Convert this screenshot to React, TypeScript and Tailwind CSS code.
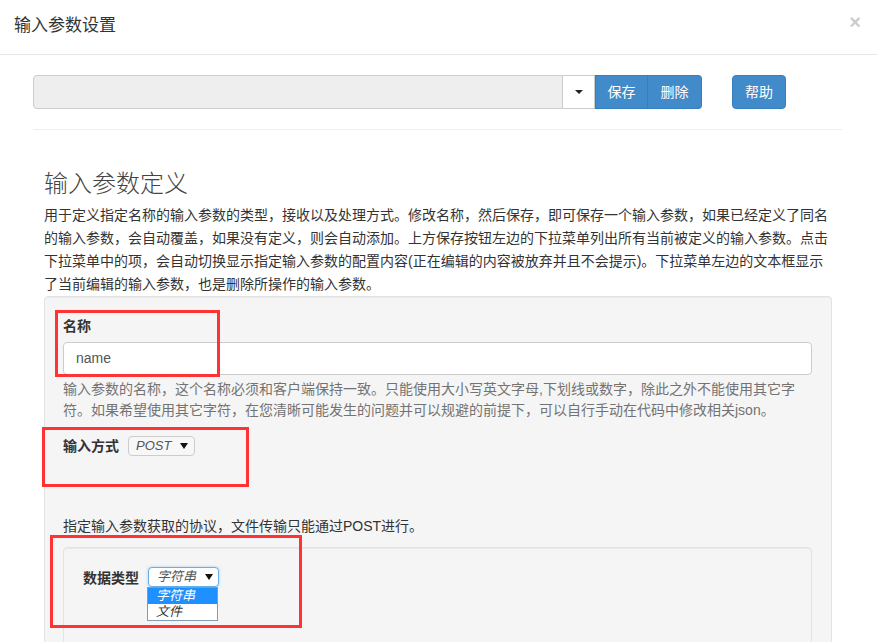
import React from 'react';

const FONT = '"Liberation Sans", "Noto Sans CJK SC", Arial, sans-serif';

function Caret({ className = '' }: { className?: string }) {
  return (
    <svg width="8" height="6" viewBox="0 0 8 6" className={className}>
      <path d="M0 0 L8 0 L4 6 Z" fill="#111" />
    </svg>
  );
}

export default function App() {
  return (
    <div
      className="relative w-[877px] h-[642px] overflow-hidden bg-white text-[14px] text-[#333]"
      style={{ fontFamily: FONT }}
    >
      {/* Modal header */}
      <div className="h-[55px] border-b border-[#e5e5e5] flex items-center justify-between pl-[14px] pr-[16px]">
        <h4 className="text-[17px] leading-[20px] text-[#333] -mt-[3px]">输入参数设置</h4>
        <span className="text-[20px] font-bold leading-none text-black opacity-20 -mt-[10px]">×</span>
      </div>

      <div className="px-[33px] pt-[20px]">
        {/* Parameter selector row */}
        <div className="flex h-[34px]">
          <div className="w-[530px] bg-[#eeeeee] border border-[#cccccc] rounded-l-[4px]" />
          <button className="w-[32px] bg-white border border-l-0 border-[#cccccc] flex items-center justify-center">
            <svg width="8" height="4" viewBox="0 0 8 4">
              <path d="M0 0 L8 0 L4 4 Z" fill="#222" />
            </svg>
          </button>
          <button className="w-[53px] bg-[#428bca] border border-[#357ebd] text-white text-[14px]">保存</button>
          <button className="w-[54px] bg-[#428bca] border border-l-0 border-[#357ebd] text-white text-[14px] rounded-r-[4px]">删除</button>
          <button className="ml-[30px] w-[54px] bg-[#428bca] border border-[#357ebd] text-white text-[14px] rounded-[4px]">帮助</button>
        </div>

        <div className="mt-[20px] w-[809px] border-t border-[#eeeeee]" />

        <div className="pl-[11px] w-[799px]">
          <h3 className="mt-[41px] text-[24px] leading-[26px] text-[#444] font-light">输入参数定义</h3>
          <p className="mt-[7px] leading-[23px] text-[#333] whitespace-nowrap">
            用于定义指定名称的输入参数的类型，接收以及处理方式。修改名称，然后保存，即可保存一个输入参数，如果已经定义了同名
            <br />
            的输入参数，会自动覆盖，如果没有定义，则会自动添加。上方保存按钮左边的下拉菜单列出所有当前被定义的输入参数。点击
            <br />
            下拉菜单中的项，会自动切换显示指定输入参数的配置内容(正在编辑的内容被放弃并且不会提示)。下拉菜单左边的文本框显示
            <br />
            了当前编辑的输入参数，也是删除所操作的输入参数。
          </p>

          {/* Well */}
          <div className="w-[788px] bg-[#f5f5f5] border border-[#e3e3e3] rounded-[4px] pt-[19px] px-[18px] pb-[40px] shadow-[inset_0_1px_1px_rgba(0,0,0,0.05)]">
            <label className="block font-bold leading-[20px]">名称</label>
            <div className="mt-[6px] h-[33px] w-[749px] bg-white border border-[#cccccc] rounded-[4px] flex items-center px-[12px] text-[14px] text-[#555]">
              name
            </div>
            <p className="mt-[4px] leading-[21px] text-[#737373] whitespace-nowrap">
              输入参数的名称，这个名称必须和客户端保持一致。只能使用大小写英文字母,下划线或数字，除此之外不能使用其它字
              <br />
              符。如果希望使用其它字符，在您清晰可能发生的问题并可以规避的前提下，可以自行手动在代码中修改相关json。
            </p>

            <div className="mt-[15px] flex items-center h-[20px]">
              <span className="font-bold">输入方式</span>
              <div className="ml-[9px] h-[20px] w-[67px] border border-[#cccccc] rounded-[4px] bg-[#f7f7f7] flex items-center justify-between pl-[7px] pr-[6px]">
                <span className="italic text-[13px] text-[#555]">POST</span>
                <Caret />
              </div>
            </div>

            <p className="mt-[60px] leading-[20px] text-[#333]">指定输入参数获取的协议，文件传输只能通过POST进行。</p>

            {/* Inner well */}
            <div className="mt-[11px] w-[749px] h-[200px] bg-[#f5f5f5] border border-[#e3e3e3] rounded-[4px] shadow-[inset_0_1px_1px_rgba(0,0,0,0.05)] pt-[19px] pl-[19px]">
              <div className="flex items-start">
                <span className="font-bold leading-[20px] mt-[1px]">数据类型</span>
                <div className="ml-[9px] relative">
                  <div className="h-[20px] w-[71px] border border-[#66afe9] rounded-[4px] bg-white shadow-[0_0_3px_rgba(102,175,233,0.6)] flex items-center justify-between pl-[8px] pr-[5px]">
                    <span className="italic text-[13px] text-[#555]">字符串</span>
                    <Caret />
                  </div>
                  <div className="absolute left-[-1px] top-[20px] w-[71px] bg-white border border-[#7f9db9] text-[13px] italic">
                    <div className="h-[16px] leading-[16px] bg-[#1e90ff] text-white pl-[8px]">字符串</div>
                    <div className="h-[16px] leading-[16px] text-[#333] pl-[8px]">文件</div>
                  </div>
                </div>
              </div>
            </div>
          </div>
        </div>
      </div>

      {/* Red annotation boxes */}
      <div className="absolute left-[55px] top-[310px] w-[165px] h-[67px] border-[3px] border-[#ff3333]" />
      <div className="absolute left-[42px] top-[427px] w-[207px] h-[60px] border-[3px] border-[#ff3333]" />
      <div className="absolute left-[50px] top-[535px] w-[252px] h-[93px] border-[3px] border-[#ff3333]" />
    </div>
  );
}
